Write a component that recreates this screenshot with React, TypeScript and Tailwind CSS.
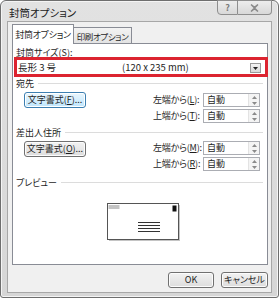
const font = "font-['Noto_Sans_CJK_JP',sans-serif] [font-feature-settings:'palt']";

const Spin = () => (
    <div className="flex h-full w-[11px] flex-col border-l border-[#e3e3e3] bg-[#f4f4f4]">
        <div className="flex flex-1 items-center justify-center">
            <svg width="5" height="3" viewBox="0 0 5 3">
                <path d="M0 3 L2.5 0 L5 3 Z" fill="#8a8a8a" />
            </svg>
        </div>
        <div className="flex flex-1 items-center justify-center">
            <svg width="5" height="3" viewBox="0 0 5 3">
                <path d="M0 0 L2.5 3 L5 0 Z" fill="#8a8a8a" />
            </svg>
        </div>
    </div>
);

const SpinInput = () => (
    <div className="flex h-[14px] w-[57px] items-center border border-[#abadb3] bg-white">
        <span className="flex-1 pl-[3px] leading-[12px]">自動</span>
        <Spin />
    </div>
);

const Heading = ({ text }: { text: string }) => (
    <div className="flex h-[11px] items-center gap-[4px] pr-[1px] leading-[11px]">
        <span className="whitespace-nowrap">{text}</span>
        <div className="h-px flex-1 bg-[#dcdcdc]" />
    </div>
);

const Row = ({ label, u }: { label: string; u: string }) => (
    <div className="flex h-[14px] items-center">
        <span className="w-[50px] whitespace-nowrap leading-[12px] tracking-[-0.2px]">
            {label}(<u>{u}</u>):
        </span>
        <SpinInput />
    </div>
);

const Group = ({
    btn,
    top,
    bottom,
    focused,
}: {
    btn: string;
    top: [string, string];
    bottom: [string, string];
    focused?: boolean;
}) => (
    <div className="flex">
        <div className="w-[137px] pl-[8px]">
            <div
                className={
                    focused
                        ? "-mt-px flex h-[16px] w-[62px] items-center justify-center whitespace-nowrap rounded-[3px] border border-[#3c7fb1] bg-gradient-to-b from-[#eaf6fd] to-[#bee6fd] shadow-[inset_0_0_0_1px_#ffffff] leading-[12px]"
                        : "flex h-[16px] w-[62px] items-center justify-center whitespace-nowrap rounded-[3px] border border-[#707070] bg-gradient-to-b from-[#f2f2f2] to-[#dddddd] shadow-[inset_0_0_0_1px_#fcfcfc] leading-[12px]"
                }
            >
                文字書式(<u>{btn}</u>)...
            </div>
        </div>
        <div className="flex flex-col gap-[2px]">
            <Row label={top[0]} u={top[1]} />
            <Row label={bottom[0]} u={bottom[1]} />
        </div>
    </div>
);

const Envelope = () => (
    <svg width="74" height="39" viewBox="0 0 74 39">
        <rect x="2" y="2" width="71" height="36" fill="#c4c4c4" />
        <rect x="0.5" y="0.5" width="71" height="36" fill="#ffffff" stroke="#555555" />
        <rect x="1.5" y="2.5" width="11" height="1" fill="#8a8a8a" />
        <rect x="1.5" y="4.5" width="11" height="1" fill="#8a8a8a" />
        <rect x="65.5" y="2.5" width="4" height="6" fill="#111111" />
        <rect x="31" y="19" width="22" height="1" fill="#333333" />
        <rect x="31" y="22" width="22" height="1" fill="#333333" />
        <rect x="31" y="25" width="22" height="1" fill="#333333" />
        <rect x="31" y="28" width="22" height="1" fill="#333333" />
    </svg>
);

const DlgButton = ({ children, w }: { children: React.ReactNode; w: string }) => (
    <div
        className={`flex h-[16px] ${w} items-center justify-center whitespace-nowrap rounded-[3px] border border-[#707070] bg-gradient-to-b from-[#f2f2f2] to-[#dddddd] shadow-[inset_0_0_0_1px_#fcfcfc] leading-[12px]`}
    >
        {children}
    </div>
);

export default function App() {
    return (
        <div className={`h-[300px] w-[279px] bg-white text-[9px] text-[#1e1e1e] ${font}`}>
            <div className="flex h-[298px] flex-col rounded-t-[6px] rounded-b-[3px] border border-[#6e6e6e] bg-gradient-to-b from-[#e2e2e2] to-[#d6d6d6] shadow-[inset_0_0_0_1px_#f4f4f4]">
                {/* title bar */}
                <div className="flex h-[20px] justify-between">
                    <span className="pl-[8px] pt-[5px] text-[10.5px] leading-[13px] text-[#202020]">
                        封筒オプション
                    </span>
                    <div className="-mt-px mr-[6px] flex self-start">
                        <div className="flex h-[15px] w-[21px] items-center justify-center rounded-bl-[4px] border border-[#8e8e8e] bg-gradient-to-b from-[#ededed] to-[#d8d8d8] text-[9px] font-bold leading-[10px] text-[#7a7a7a]">
                            ?
                        </div>
                        <div className="flex h-[15px] w-[34px] items-center justify-center rounded-br-[4px] border border-l-0 border-[#8e8e8e] bg-gradient-to-b from-[#ededed] to-[#d8d8d8]">
                            <svg width="9" height="8" viewBox="0 0 9 8">
                                <path
                                    d="M1 0.5 L4.5 3.2 L8 0.5 M1 7.5 L4.5 4.8 L8 7.5 M1 0.5 L8 7.5 M8 0.5 L1 7.5"
                                    stroke="#8a8a8a"
                                    strokeWidth="1.4"
                                    fill="none"
                                />
                            </svg>
                        </div>
                    </div>
                </div>

                {/* client area */}
                <div className="mx-[6px] flex h-[272px] flex-col border border-[#a7a7a7] bg-[#f0f0f0] pl-[4px] pt-[2px]">
                    <div className="relative z-10 -mb-px flex items-end">
                        <div className="flex h-[20px] w-[62px] items-center justify-center whitespace-nowrap border border-b-0 border-[#898c95] bg-white leading-[12px] tracking-[-0.3px]">
                            封筒オプション
                        </div>
                        <div className="mb-px flex h-[16px] w-[58px] items-center justify-center whitespace-nowrap border border-b-0 border-l-0 border-[#898c95] bg-gradient-to-b from-[#f3f3f3] to-[#e3e3e3] text-[8.5px] leading-[12px] tracking-[-0.4px]">
                            印刷オプション
                        </div>
                    </div>
                    <div className="flex h-[222px] w-[256px] flex-col border border-[#898c95] bg-white px-[3px] pt-[3px]">
                        <div className="leading-[11px]">
                            封筒サイズ(<u>S</u>):
                        </div>
                        <div className="-mt-px ml-[-2px] mr-[-4px] flex h-[20px] items-center border-[3px] border-[#dc2430] bg-white pl-px pr-[4px]">
                            <span className="w-[104px] text-[9.5px] leading-[12px]">長形 3 号</span>
                            <span className="flex-1 text-[9.5px] leading-[12px]">(120 x 235 mm)</span>
                            <div className="mt-[2px] flex h-[10px] w-[11px] items-center justify-center border border-[#9a9a9a] bg-gradient-to-b from-[#f4f4f4] to-[#d9d9d9]">
                                <svg width="5" height="3" viewBox="0 0 5 3">
                                    <path d="M0 0 L2.5 3 L5 0 Z" fill="#222222" />
                                </svg>
                            </div>
                        </div>
                        <div className="mt-px">
                            <Heading text="宛先" />
                        </div>
                        <div className="mt-[4px]">
                            <Group btn="F" top={["左端から", "L"]} bottom={["上端から", "T"]} focused />
                        </div>
                        <div className="mt-[4px]">
                            <Heading text="差出人住所" />
                        </div>
                        <div className="mt-[3px]">
                            <Group btn="O" top={["左端から", "M"]} bottom={["上端から", "R"]} />
                        </div>
                        <div className="mt-[6px]">
                            <Heading text="プレビュー" />
                        </div>
                        <div className="ml-[91px] mt-[15px]">
                            <Envelope />
                        </div>
                    </div>
                    <div className="mt-[7px] flex justify-end gap-[7px] pr-[3px]">
                        <DlgButton w="w-[46px]">OK</DlgButton>
                        <DlgButton w="w-[47px]">キャンセル</DlgButton>
                    </div>
                </div>
            </div>
        </div>
    );
}
